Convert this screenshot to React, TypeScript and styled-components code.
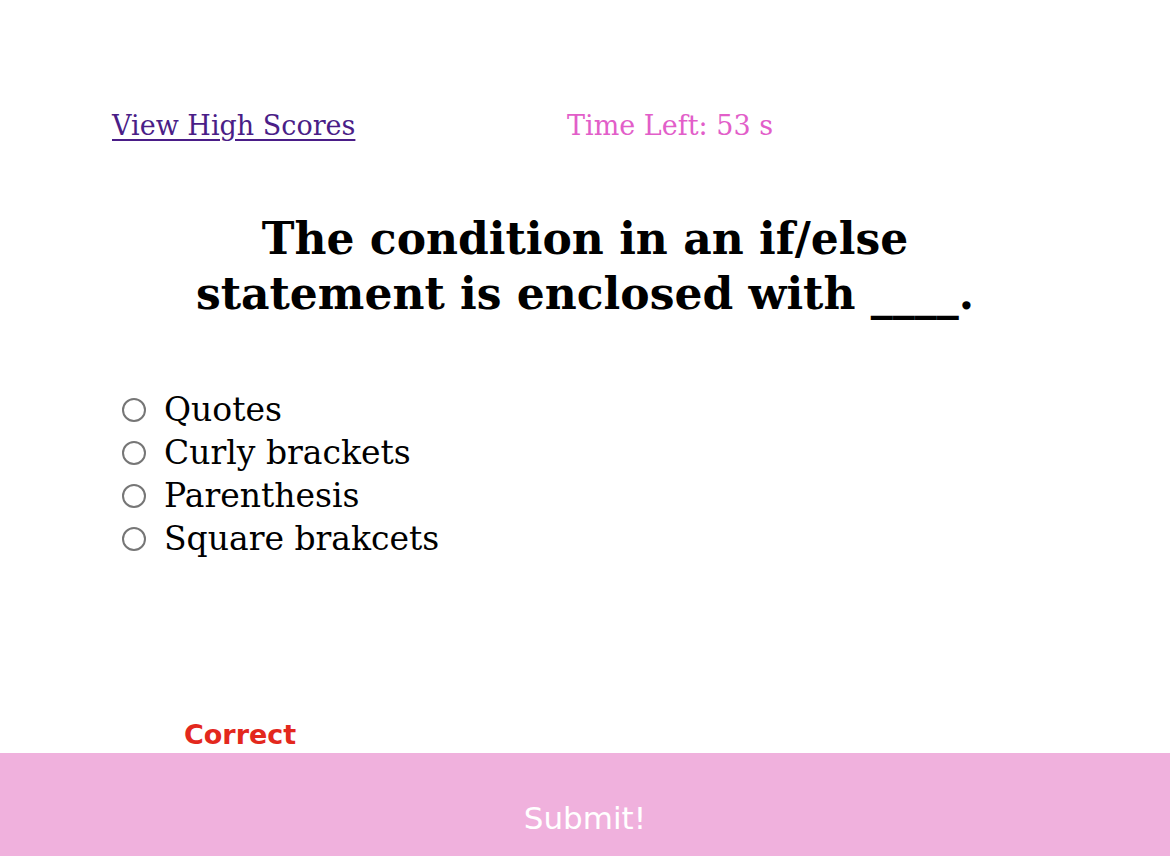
import React, { useState } from 'react';
import styled, { createGlobalStyle } from 'styled-components';

const GlobalStyle = createGlobalStyle`
  html, body {
    margin: 0;
    padding: 0;
    background: #ffffff;
  }
  body {
    font-family: "DejaVu Serif", Georgia, serif;
  }
`;

const Page = styled.div`
  width: 1170px;
  height: 856px;
  display: flex;
  flex-direction: column;
  overflow: hidden;
`;

const Header = styled.header`
  display: flex;
  align-items: baseline;
  padding: 106px 0 0 112px;
  font-size: 27px;
  line-height: 40px;
`;

const HighScoresLink = styled.a`
  color: #4a1d87;
  text-decoration: underline;
  text-underline-offset: 4px;
  width: 455px;
`;

const Timer = styled.span`
  color: #e25ec9;
`;

const Question = styled.h1`
  margin: 65px auto 0;
  width: 820px;
  text-align: center;
  font-size: 44px;
  line-height: 55px;
  font-weight: bold;
  color: #000;
`;

const Choices = styled.ul`
  list-style: none;
  margin: 67px 0 0 122px;
  padding: 0;
  display: flex;
  flex-direction: column;
`;

const Choice = styled.li`
  display: flex;
  align-items: center;
  height: 43px;
  font-size: 33px;
  color: #000;
`;

const Radio = styled.input`
  appearance: none;
  box-sizing: border-box;
  flex: none;
  width: 24px;
  height: 24px;
  margin: 0 18px 0 0;
  border: 2px solid #767676;
  border-radius: 50%;
  background: #fff;
  &:checked {
    border: 6px solid #0075ff;
  }
`;

const Footer = styled.div`
  margin-top: auto;
  display: flex;
  flex-direction: column;
`;

const Feedback = styled.p`
  margin: 0 0 0 184px;
  font-family: "DejaVu Sans", Verdana, sans-serif;
  font-weight: bold;
  font-size: 27px;
  line-height: 36px;
  color: #e3281d;
`;

const SubmitBar = styled.button`
  height: 103px;
  border: none;
  background: #f0b1dd;
  color: #ffffff;
  font-family: "DejaVu Sans", Tahoma, sans-serif;
  font-size: 31px;
  padding: 26px 0 0;
  cursor: pointer;
`;

const options = ['Quotes', 'Curly brackets', 'Parenthesis', 'Square brakcets'];

export default function App() {
  const [picked, setPicked] = useState<string | null>(null);

  return (
    <Page>
      <GlobalStyle />
      <Header>
        <HighScoresLink href="#">View High Scores</HighScoresLink>
        <Timer>Time Left: 53 s</Timer>
      </Header>

      <Question>The condition in an if/else statement is enclosed with ____.</Question>

      <Choices>
        {options.map(opt => (
          <Choice key={opt}>
            <Radio
              type="radio"
              name="answer"
              checked={picked === opt}
              onChange={() => setPicked(opt)}
            />
            {opt}
          </Choice>
        ))}
      </Choices>

      <Footer>
        <Feedback>Correct</Feedback>
        <SubmitBar type="button">Submit!</SubmitBar>
      </Footer>
    </Page>
  );
}
